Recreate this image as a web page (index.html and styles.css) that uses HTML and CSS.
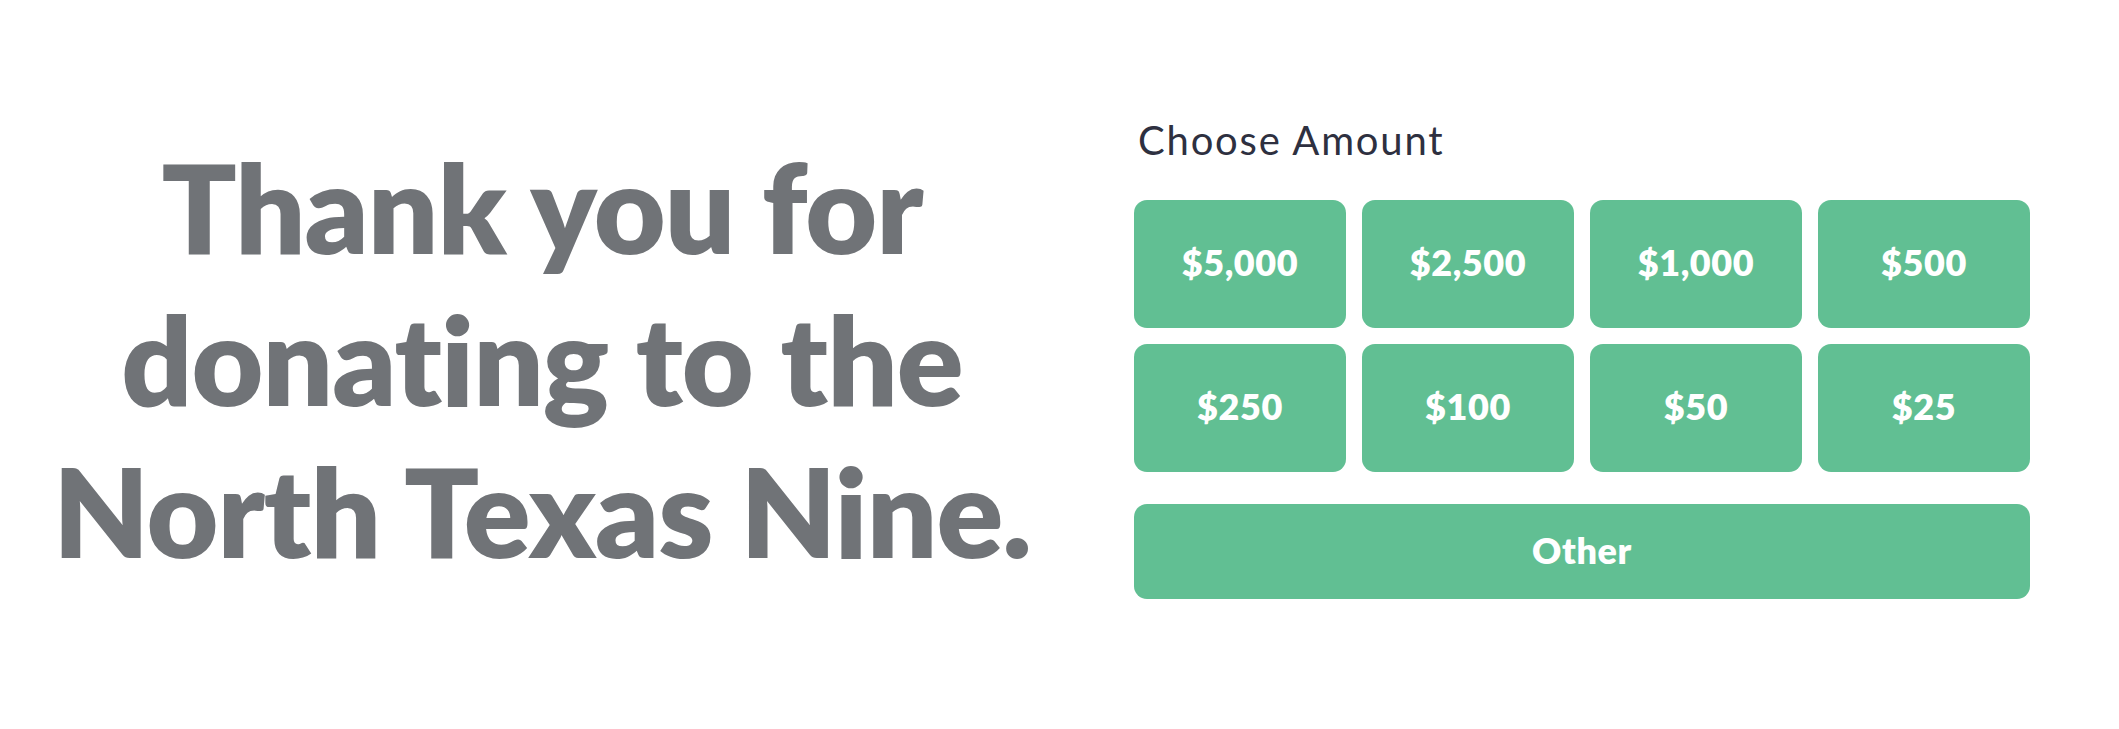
FILE: index.html
```html
<!DOCTYPE html>
<html lang="en">
<head>
<meta charset="utf-8">
<title>Donate</title>
<link rel="stylesheet" href="styles.css">
</head>
<body>
<main class="page">
  <section class="intro">
    <h1 class="headline">Thank you for<br>donating to the<br>North Texas Nine.</h1>
  </section>
  <section class="amounts">
    <h2 class="label">Choose Amount</h2>
    <div class="grid">
      <button class="amt">$5,000</button>
      <button class="amt">$2,500</button>
      <button class="amt">$1,000</button>
      <button class="amt">$500</button>
      <button class="amt">$250</button>
      <button class="amt">$100</button>
      <button class="amt">$50</button>
      <button class="amt">$25</button>
    </div>
    <button class="amt other">Other</button>
  </section>
</main>
</body>
</html>
```
FILE: styles.css
```css
* { box-sizing: border-box; }
html, body { margin: 0; padding: 0; background: #ffffff; }
body {
  font-family: "Lato", "Liberation Sans", sans-serif;
  font-variant-ligatures: none;
}

.page {
  display: flex;
  align-items: center;
  height: 729px;
  padding-bottom: 14px;
}

.intro {
  width: 1084px;
  flex: none;
  text-align: center;
}

.headline {
  margin: 0;
  font-size: 124px;
  line-height: 152px;
  font-weight: 800;
  letter-spacing: -1px;
  color: #707377;
}

.amounts {
  margin-left: 50px;
  width: 896px;
  flex: none;
  display: flex;
  flex-direction: column;
}

.label {
  margin: 0 0 36px 4px;
  font-size: 40px;
  line-height: 48px;
  font-weight: 400;
  letter-spacing: 1.8px;
  color: #2e3040;
}

.grid {
  display: grid;
  grid-template-columns: repeat(4, 1fr);
  gap: 16px;
}

.amt {
  height: 128px;
  border: none;
  border-radius: 13px;
  background: #61bf93;
  color: #ffffff;
  font-family: "Lato", "Liberation Sans", sans-serif;
  font-variant-ligatures: none;
  font-size: 36px;
  font-weight: 800;
  letter-spacing: 0.6px;
  padding: 0 0 4px;
}

.other {
  margin-top: 32px;
  height: 95px;
  width: 100%;
}
```
